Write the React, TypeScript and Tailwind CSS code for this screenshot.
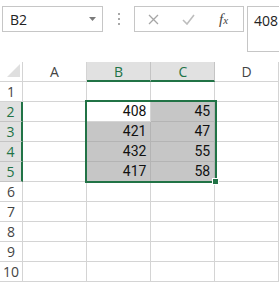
import React from "react";

const cols = ["A", "B", "C", "D"];
const colW = ["w-[64px]", "w-[65px]", "w-[64px]", "w-[64px]"];
const data: Record<number, [string, string]> = {
  2: ["408", "45"],
  3: ["421", "47"],
  4: ["432", "55"],
  5: ["417", "58"],
};

function HeaderRow() {
  return (
    <div className="flex h-[20px]">
      <div className="w-[23px] h-[20px] border-r border-b border-[#d4d4d4] flex items-end justify-end pr-[2px] pb-[4px] bg-white">
        <svg width="13" height="13" viewBox="0 0 13 13">
          <polygon points="13,0 13,13 0,13" fill="#dfdfdf" />
        </svg>
      </div>
      {cols.map((c, i) => {
        const sel = c === "B" || c === "C";
        return (
          <div
            key={c}
            className={`${colW[i]} h-[20px] border-r flex items-center justify-center text-[14px] ${
              sel
                ? "bg-[#e1e1e1] border-[#c4c4c4] border-b-2 border-b-[#217346] text-[#217346]"
                : "bg-white border-[#d4d4d4] border-b text-[#444]"
            }`}
          >
            {c}
          </div>
        );
      })}
    </div>
  );
}

function Row({ n }: { n: number }) {
  const sel = n >= 2 && n <= 5;
  const d = data[n];
  return (
    <div className="flex h-[20px]">
      <div
        className={`w-[23px] h-[20px] border-b flex items-center justify-center text-[14px] ${
          sel
            ? "bg-[#e1e1e1] border-[#c4c4c4] border-r-2 border-r-[#217346] text-[#217346]"
            : "bg-white border-[#d4d4d4] border-r text-[#444]"
        }`}
      >
        {n}
      </div>
      {cols.map((c, i) => {
        const inSel = sel && (c === "B" || c === "C");
        const active = n === 2 && c === "B";
        const val = d ? (c === "B" ? d[0] : c === "C" ? d[1] : "") : "";
        return (
          <div
            key={c}
            className={`${colW[i]} h-[20px] border-r border-b flex items-center justify-end pr-[4px] text-[14px] text-[#111] font-['Roboto',sans-serif] ${
              inSel && !active ? "bg-[#c6c6c6] border-[#b4b4b4]" : "bg-white border-[#d4d4d4]"
            }`}
          >
            {val}
          </div>
        );
      })}
    </div>
  );
}

export default function App() {
  return (
    <div className="w-[279px] h-[283px] bg-white overflow-hidden relative font-['Open_Sans',sans-serif]">
      <div className="h-[62px] flex items-start pt-[6px]">
        <div className="ml-[2px] w-[101px] h-[26px] border border-[#c6c6c6] flex items-center justify-between pl-[7px] pr-[6px] text-[14px] text-[#222]">
          <span>B2</span>
          <svg width="7" height="4" viewBox="0 0 7 4">
            <polygon points="0,0 7,0 3.5,4" fill="#7a7a7a" />
          </svg>
        </div>
        <div className="w-[31px] h-[26px] flex flex-col items-center justify-center gap-[3px]">
          <div className="w-[2px] h-[2px] bg-[#a8a8a8]" />
          <div className="w-[2px] h-[2px] bg-[#a8a8a8]" />
          <div className="w-[2px] h-[2px] bg-[#a8a8a8]" />
        </div>
        <div className="w-[110px] h-[26px] border border-[#c6c6c6] flex items-center pl-[13px]">
          <svg width="11" height="11" viewBox="0 0 11 11">
            <path d="M1 1 L10 10 M10 1 L1 10" stroke="#a6a6a6" strokeWidth="1.3" fill="none" />
          </svg>
          <svg className="ml-[23px]" width="13" height="11" viewBox="0 0 13 11">
            <path d="M1 6 L5 10 L12 1" stroke="#bdbdbd" strokeWidth="1.6" fill="none" />
          </svg>
          <span className="ml-[24px] font-['Liberation_Serif',serif] italic text-[15px] text-[#444] leading-none">
            f<span className="text-[11px]">x</span>
          </span>
        </div>
        <div className="ml-[3px] flex-1 h-[46px] border-l border-t border-b border-[#c6c6c6] pl-[6px] pt-[3px] text-[14px] text-[#222]">
          408
        </div>
      </div>
      <HeaderRow />
      {[1, 2, 3, 4, 5, 6, 7, 8, 9, 10].map((n) => (
        <Row key={n} n={n} />
      ))}
      <div className="absolute left-[85px] top-[100px] w-[132px] h-[83px] border-2 border-[#217346]" />
      <div className="absolute left-[212px] top-[178px] w-[7px] h-[7px] bg-[#217346] border border-white" />
    </div>
  );
}
